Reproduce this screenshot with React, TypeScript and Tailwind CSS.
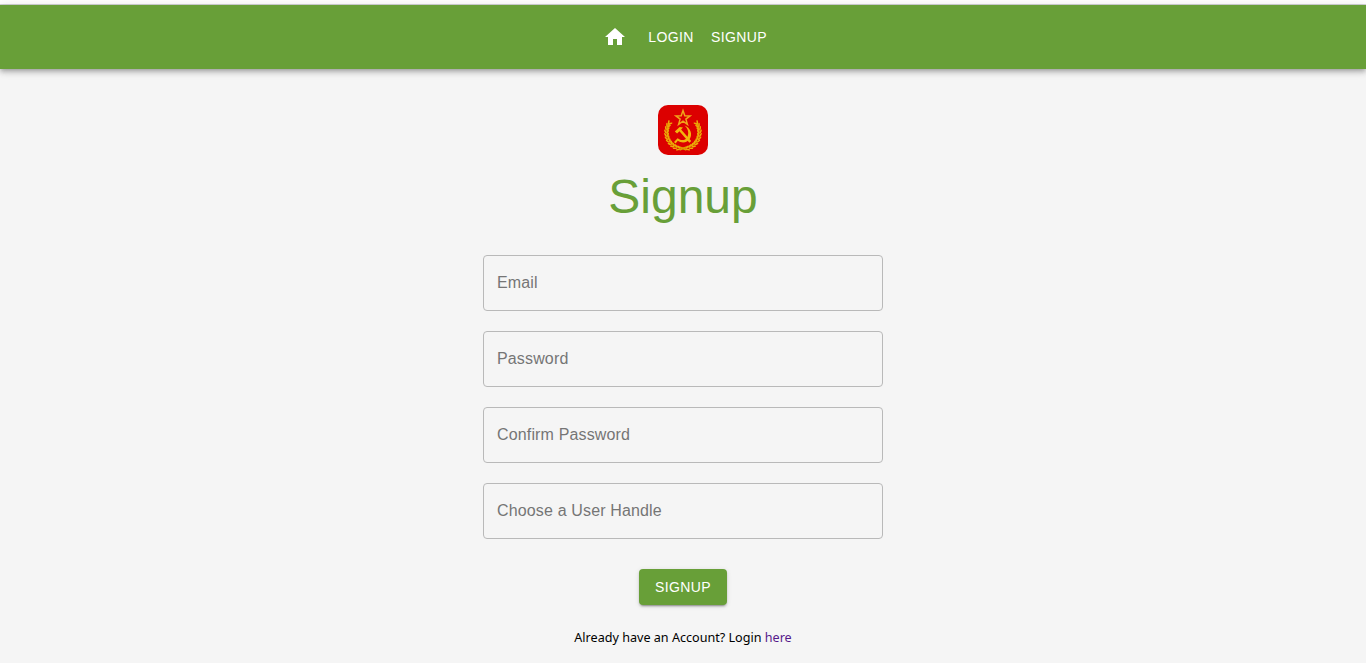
const leafAngles = [-38, -27, -16, -5, 6, 17, 28, 39, 50, 61, 72];

function Wreath() {
  return (
    <g>
      <path d="M11.5 18 C7 26 9.5 37 18 41 C21 42.6 24 42.5 28.5 45" fill="none" stroke="#e09a00" strokeWidth="1.8" />
      {leafAngles.map((a) => (
        <g key={a} transform={`rotate(${-a} 25 27.5) translate(8.6 27.5)`} fill="#edab08">
          <ellipse cx="-1.4" cy="0" rx="0.85" ry="2.3" transform="rotate(-28)" />
          <ellipse cx="1.3" cy="0" rx="0.8" ry="2" transform="rotate(28)" />
        </g>
      ))}
    </g>
  );
}

function Emblem() {
  return (
    <svg viewBox="0 0 50 50" className="size-[50px] rounded-[10px] bg-[#dc0000]" role="img" aria-label="Emblem">
      <Wreath />
      <g transform="translate(50 0) scale(-1 1)">
        <Wreath />
      </g>
      <path
        d="M25 5.6 L26.8 10.8 L32.1 10.9 L27.9 14.1 L29.4 19.3 L25 16.2 L20.6 19.3 L22.1 14.1 L17.9 10.9 L23.2 10.8 Z"
        fill="none"
        stroke="#f0a51a"
        strokeWidth="1.5"
      />
      <g transform="translate(0 1.2)" fill="#f3b50d">
        <path d="M26.5 19.4 C32.5 21.5 34.6 28 32 32.4 C29.2 37 23.6 37.2 19.8 34.6 L17.6 37.2 L16 35.8 L19.6 32 C23.6 35 27.6 34.2 29.3 31 C31.3 27 30.2 22.5 26.5 19.4 Z" />
        <path d="M16.8 25.4 L21.7 20.8 L25 21.3 L23.1 23.2 L33.2 34.8 L31.4 36.6 L21.4 25 L19.1 27.4 Z" />
      </g>
    </svg>
  );
}

function Field({ label, type = "text" }: { label: string; type?: string }) {
  return (
    <input
      type={type}
      placeholder={label}
      aria-label={label}
      className="block h-14 w-full rounded border border-[#b9b9b9] bg-transparent px-[13px] text-base tracking-[0.15px] outline-none placeholder:text-[#757575] placeholder:opacity-100"
    />
  );
}

export default function App() {
  return (
    <div className="flex h-[663px] flex-col overflow-hidden bg-[#f5f5f5] font-['Liberation_Sans',Arial,sans-serif]">
      <div className="h-[5px] shrink-0 border-b border-[#d3d4d7] bg-white" />
      <header className="flex h-16 shrink-0 items-center justify-center bg-[#689f38] text-sm font-normal tracking-[0.4px] text-white shadow-[0_2px_4px_-1px_rgba(0,0,0,0.2),0_4px_5px_0_rgba(0,0,0,0.14),0_1px_10px_0_rgba(0,0,0,0.12)]">
        <a href="#home" aria-label="Home" className="flex w-12 justify-center">
          <svg viewBox="0 0 24 24" className="size-6 fill-white">
            <path d="M10 20v-6h4v6h5v-8h3L12 3 2 12h3v8z" />
          </svg>
        </a>
        <a href="#login" className="w-16 px-2 text-center">LOGIN</a>
        <a href="#signup" className="w-[72px] px-2 text-center">SIGNUP</a>
      </header>
      <main className="mx-auto flex w-[400px] flex-col items-center pt-9">
        <Emblem />
        <h1 className="mt-[14px] text-5xl leading-[56px] text-[#689f38]">Signup</h1>
        <form className="mt-[30px] flex w-full flex-col items-center gap-5">
          <Field label="Email" />
          <Field label="Password" type="password" />
          <Field label="Confirm Password" type="password" />
          <Field label="Choose a User Handle" />
          <button
            type="button"
            className="mt-[10px] h-9 w-[88px] rounded bg-[#689f38] text-sm tracking-[0.4px] text-white shadow-[0_3px_1px_-2px_rgba(0,0,0,0.2),0_2px_2px_0_rgba(0,0,0,0.14),0_1px_5px_0_rgba(0,0,0,0.12)]"
          >
            SIGNUP
          </button>
        </form>
        <p className="mt-6 font-['Noto_Sans','Open_Sans',sans-serif] text-[12.6px] leading-[18px] whitespace-nowrap text-black">
          Already have an Account? Login <a href="#login" className="text-[#551a8b]">here</a>
        </p>
      </main>
    </div>
  );
}
